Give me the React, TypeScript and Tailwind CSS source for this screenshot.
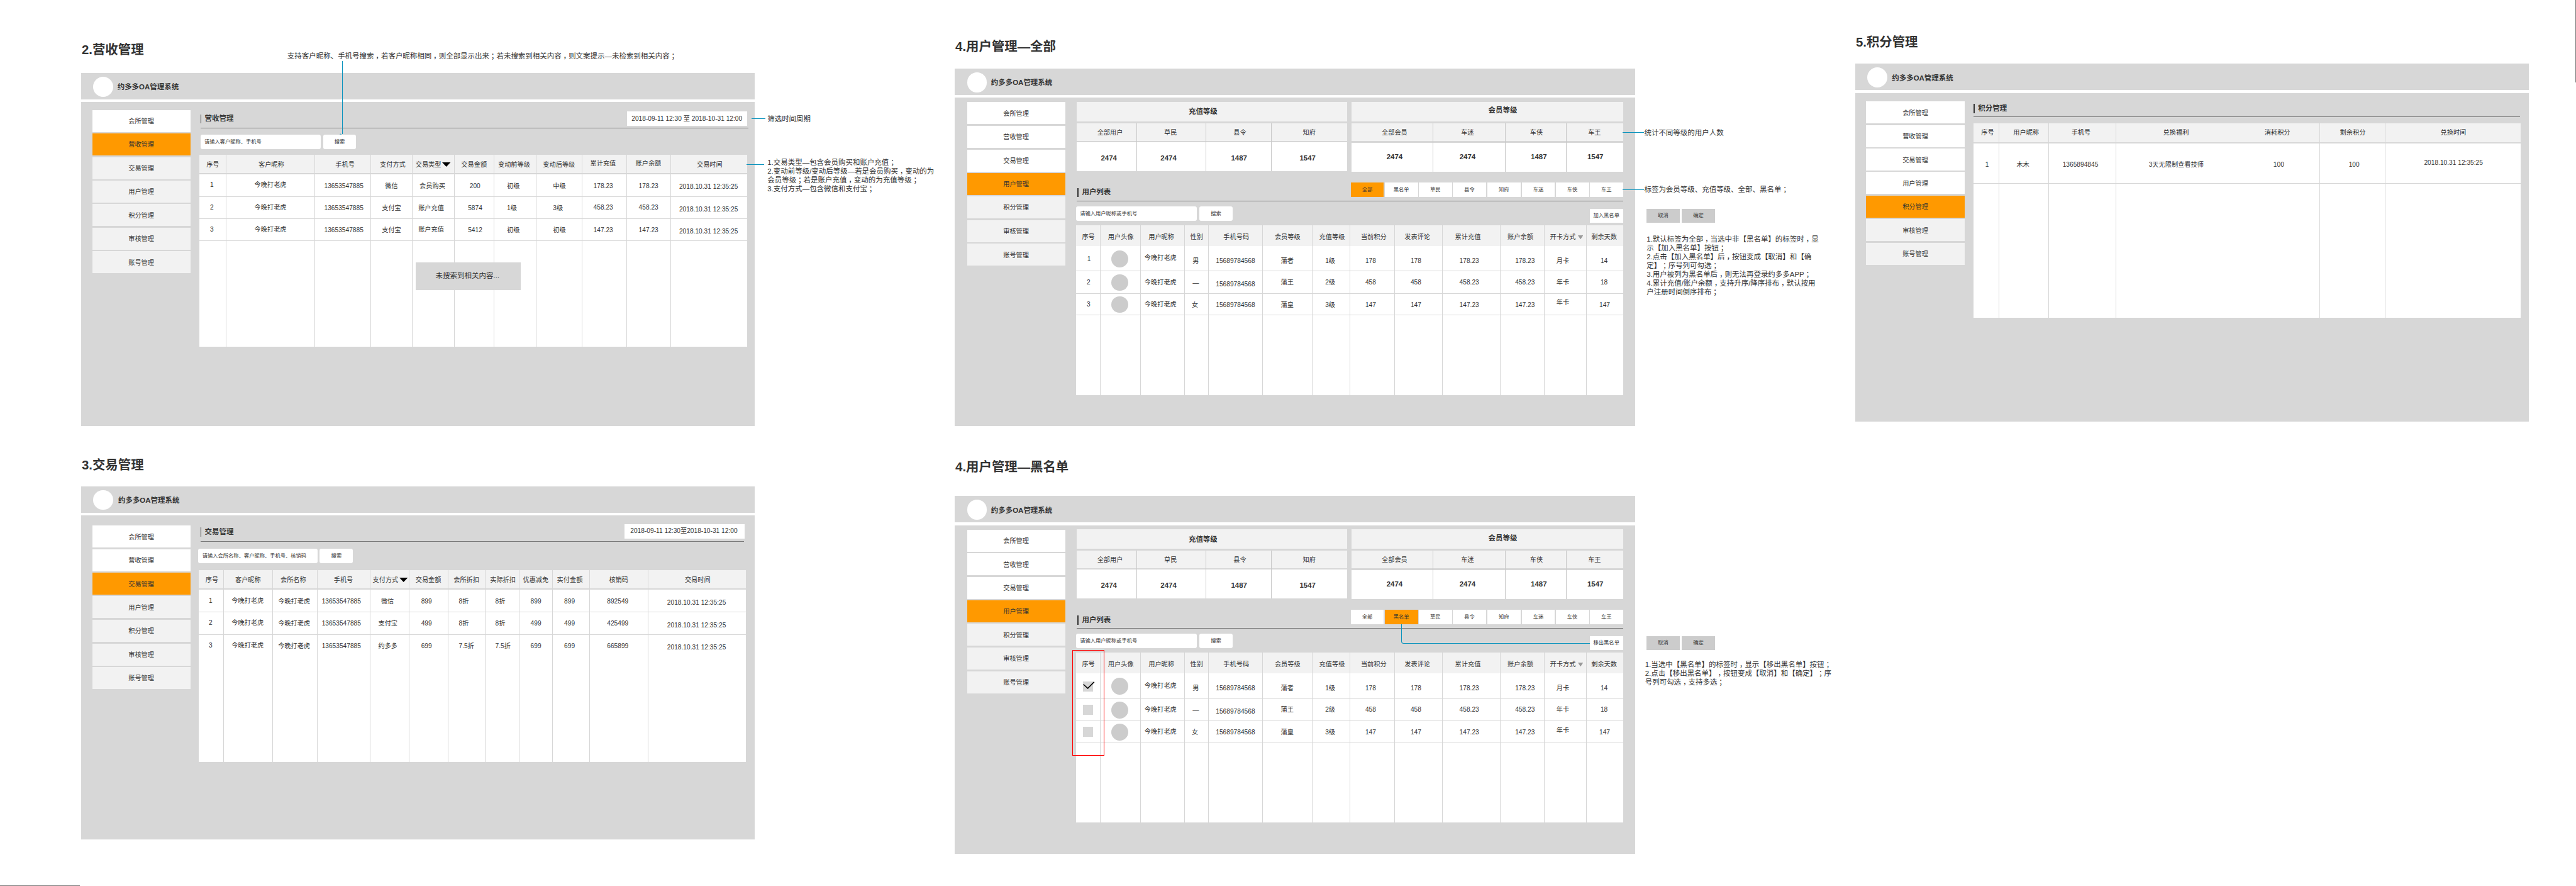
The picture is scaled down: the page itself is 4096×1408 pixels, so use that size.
import { Fragment, type ReactNode } from 'react';

// Every spacing class is counted in design units: one unit is 0.637212px,
// set through --spacing on the root element.

type Cell = ReactNode | [ReactNode, string];

type Column = {
  w: string;
  head: ReactNode;
  headPad: string;
  pad: string;
  cells: Cell[];
  open?: boolean;
};

const MENU = ['会所管理', '营收管理', '交易管理', '用户管理', '积分管理', '审核管理', '账号管理'];

function Title({ children, className }: { children: ReactNode; className: string }) {
  return (
    <h2 className={`flex h-44 shrink-0 items-center pl-1 text-[20.4px] font-bold whitespace-nowrap ${className}`}>
      {children}
    </h2>
  );
}

function Nav({ active, className }: { active: number; className: string }) {
  return (
    <nav className={`flex w-245 shrink-0 flex-col ${className}`}>
      {MENU.map((item, i) => (
        <div
          key={item}
          className={`flex h-55 shrink-0 items-center justify-center pt-3 ${i === 2 ? 'mb-3' : 'mb-4'} ${
            i === active ? 'bg-[#ff9900]' : i < active || i === 0 ? 'bg-white' : 'bg-[#f2f2f2]'
          }`}
        >
          {item}
        </div>
      ))}
    </nav>
  );
}

function Frame({
  active,
  width,
  height,
  brandPad,
  navClass,
  children,
}: {
  active: number;
  width: string;
  height: string;
  brandPad: string;
  navClass: string;
  children: ReactNode;
}) {
  return (
    <div className={`flex shrink-0 flex-col gap-7 ${width}`}>
      <header className="flex h-66 items-center bg-[#d7d7d7] pt-2 pl-30">
        <div className="size-50 rounded-full bg-white" />
        <div className={`pt-5 text-[11.47px] font-bold ${brandPad}`}>约多多OA管理系统</div>
      </header>
      <div className={`flex items-start bg-[#d7d7d7] ${height}`}>
        <Nav active={active} className={navClass} />
        {children}
      </div>
    </div>
  );
}

function SectionTitle({ children, className }: { children: ReactNode; className: string }) {
  return (
    <h3 className={`flex items-center text-[11.47px] font-bold ${className}`}>
      <span className="h-23 w-3 bg-[#333333]" />
      <span className="pl-8">{children}</span>
    </h3>
  );
}

function SearchRow({ hint, inputClass, gap, children }: { hint: string; inputClass: string; gap: string; children?: ReactNode }) {
  return (
    <div className="flex h-36 items-start text-[8.28px]">
      <div className={`flex h-36 items-center rounded-[3px] bg-white pt-1 pl-10 ${inputClass}`}>{hint}</div>
      <div className={`flex h-36 w-83 items-center justify-center rounded-[3px] bg-white pt-1 ${gap}`}>搜索</div>
      {children}
    </div>
  );
}

function Table({
  columns,
  height,
  headHeight,
  gap,
  rows,
  className,
}: {
  columns: Column[];
  height: string;
  headHeight: string;
  gap: string;
  rows: string[];
  className: string;
}) {
  return (
    <div className={`flex bg-white whitespace-nowrap ${height} ${className}`}>
      {columns.map((c, i) => (
        <div
          key={i}
          className={`shrink-0 border-[#d7d7d7] ${c.open || i === columns.length - 1 ? '' : 'border-r'} ${c.w}`}
        >
          <div className={`flex items-center bg-[#f2f2f2] ${headHeight} ${c.headPad}`}>{c.head}</div>
          <div className={`bg-[#d7d7d7] ${gap}`} />
          {c.cells.map((cell, r) => {
            const [content, pad] = Array.isArray(cell) ? (cell as [ReactNode, string]) : [cell, c.pad];
            return (
              <div key={r} className={`flex items-center border-[#d7d7d7] ${rows[r]} ${pad}`}>
                {content}
              </div>
            );
          })}
        </div>
      ))}
    </div>
  );
}

function Triangle({ className }: { className: string }) {
  return (
    <svg viewBox="0 0 20 11" preserveAspectRatio="none" className={className}>
      <polygon points="0,0 20,0 10,11" fill="currentColor" />
    </svg>
  );
}

// Full-width commas and semicolons sit on the baseline, in the middle of their cell.
function Note({ lines, className }: { lines: string[]; className: string }) {
  return (
    <div className={`text-[11.47px] leading-22 whitespace-nowrap ${className}`}>
      {lines.map((line) => (
        <p key={line}>
          {line.split(/([，；])/).map((part, i) =>
            part === '，' || part === '；' ? (
              <span key={i} className="inline-block w-[1em] pl-[0.25em]">
                {part}
              </span>
            ) : (
              <Fragment key={i}>{part}</Fragment>
            ),
          )}
        </p>
      ))}
    </div>
  );
}

const revenueColumns: Column[] = [
  { w: 'w-68', head: '序号', headPad: 'pl-18 pt-4', pad: 'pl-27', cells: ['1', '2', '3'] },
  { w: 'w-222', head: '客户昵称', headPad: 'pl-80 pt-4', pad: 'pl-70', cells: ['今晚打老虎', '今晚打老虎', '今晚打老虎'] },
  { w: 'w-139', head: '手机号', headPad: 'pl-50 pt-4', pad: 'pl-22 pt-4', cells: ['13653547885', '13653547885', '13653547885'] },
  { w: 'w-103', head: '支付方式', headPad: 'pl-22 pt-4', pad: 'pl-27 pt-4', cells: [['微信', 'pl-35 pt-4'], '支付宝', '支付宝'] },
  {
    w: 'w-106',
    head: (
      <>
        交易类型
        <Triangle className="mb-2 ml-3 h-11 w-21 text-black" />
      </>
    ),
    headPad: 'pl-8 pt-4',
    pad: 'pl-15 pt-4',
    cells: [['会员购买', 'pl-18 pt-5'], '账户充值', ['账户充值', 'pl-15']],
  },
  { w: 'w-98', head: '交易金额', headPad: 'pl-16 pt-4', pad: 'pl-33 pt-4', cells: [['200', 'pl-37 pt-4'], '5874', '5412'] },
  { w: 'w-106', head: '变动前等级', headPad: 'pl-10 pt-4', pad: 'pl-32 pt-4', cells: ['初级', '1级', '初级'] },
  { w: 'w-114', head: '变动后等级', headPad: 'pl-16 pt-4', pad: 'pl-41 pt-4', cells: ['中级', '3级', '初级'] },
  { w: 'w-111', head: '累计充值', headPad: 'pl-20', pad: 'pl-28 pt-4', cells: ['178.23', ['458.23', 'pl-28 pt-1'], '147.23'] },
  { w: 'w-110', head: '账户余额', headPad: 'pl-22', pad: 'pl-30 pt-4', cells: ['178.23', ['458.23', 'pl-30 pt-1'], '147.23'] },
  {
    w: 'w-190',
    head: '交易时间',
    headPad: 'pl-65 pt-4',
    pad: 'pl-21 pt-10',
    cells: ['2018.10.31 12:35:25', '2018.10.31 12:35:25', '2018.10.31 12:35:25'],
  },
];

const tradeColumns: Column[] = [
  { w: 'w-63', head: '序号', headPad: 'pl-17 pt-3', pad: 'pl-25 pt-1', cells: ['1', '2', '3'] },
  { w: 'w-122', head: '客户昵称', headPad: 'pl-28 pt-3', pad: 'pl-19 pt-1', cells: ['今晚打老虎', '今晚打老虎', '今晚打老虎'] },
  { w: 'w-112', head: '会所名称', headPad: 'pl-19 pt-3', pad: 'pl-13 pt-4', cells: ['今晚打老虎', '今晚打老虎', '今晚打老虎'] },
  { w: 'w-131', head: '手机号', headPad: 'pl-40 pt-3', pad: 'pl-10 pt-4', cells: ['13653547885', '13653547885', '13653547885'] },
  {
    w: 'w-98',
    head: (
      <>
        支付方式
        <Triangle className="ml-2 h-11 w-21 text-black" />
      </>
    ),
    headPad: 'pl-6 pt-3',
    pad: 'pl-20 pt-4',
    cells: [['微信', 'pl-27 pt-4'], '支付宝', '约多多'],
  },
  { w: 'w-97', head: '交易金额', headPad: 'pl-15 pt-3', pad: 'pl-29 pt-4', cells: ['899', '499', '699'] },
  { w: 'w-92', head: '会所折扣', headPad: 'pl-13 pt-3', pad: 'pl-26 pt-4', cells: ['8折', '8折', '7.5折'] },
  { w: 'w-85', head: '实际折扣', headPad: 'pl-12 pt-3', pad: 'pl-25 pt-4', cells: ['8折', '8折', '7.5折'] },
  { w: 'w-84', head: '优惠减免', headPad: 'pl-9 pt-3', pad: 'pl-28 pt-4', cells: ['899', '499', '699'] },
  { w: 'w-92', head: '实付金额', headPad: 'pl-10 pt-3', pad: 'pl-28 pt-4', cells: ['899', '499', '699'] },
  { w: 'w-146', head: '核销码', headPad: 'pl-48 pt-3', pad: 'pl-43 pt-4', cells: ['892549', '425499', '665899'] },
  {
    w: 'w-244',
    head: '交易时间',
    headPad: 'pl-91 pt-3',
    pad: 'pl-47 pt-11',
    cells: ['2018.10.31 12:35:25', '2018.10.31 12:35:25', '2018.10.31 12:35:25'],
  },
];

const pointColumns: Column[] = [
  { w: 'w-64', head: '序号', headPad: 'pl-19 pt-2', pad: 'pl-29 pt-9', cells: ['1'] },
  { w: 'w-124', head: '用户昵称', headPad: 'pl-35 pt-2', pad: 'pl-43 pt-7', cells: ['木木'] },
  { w: 'w-168', head: '手机号', headPad: 'pl-56 pt-2', pad: 'pl-34 pt-7', cells: ['1365894845'] },
  { w: 'w-319', head: '兑换福利', headPad: 'pl-117 pt-2', pad: 'pl-81 pt-10', cells: ['3天无限制查看技师'], open: true },
  { w: 'w-190', head: '消耗积分', headPad: 'pl-51 pt-2', pad: 'pl-73 pt-9', cells: ['100'] },
  { w: 'w-163', head: '剩余积分', headPad: 'pl-49 pt-2', pad: 'pl-71 pt-9', cells: ['100'] },
  { w: 'w-337', head: '兑换时间', headPad: 'pl-137 pt-2', pad: 'pl-96 pb-2', cells: ['2018.10.31 12:35:25'] },
];

const avatar = <span className="size-42 rounded-full bg-[#cccccc]" />;
const checkbox = <span className="size-25 bg-[#d7d7d7]" />;
const checkedBox = (
  <span className="relative size-25 bg-[#d7d7d7]">
    <svg viewBox="0 0 30 22" className="absolute top-0 left-0 h-22 w-30" fill="none" stroke="#000" strokeWidth="2.4">
      <path d="M1 7 L12 17 L28 1" />
    </svg>
  </span>
);

function userColumns(selecting: boolean): Column[] {
  const first: Cell[] = selecting
    ? [[checkedBox, 'pl-18 pt-5'], [checkbox, 'pl-18'], [checkbox, 'pl-18']]
    : [['1', 'pl-28 pt-4'], '2', '3'];
  const spread = (pads: [string, string, string], values: [ReactNode, ReactNode, ReactNode]): Cell[] =>
    values.map((v, i): Cell => [v, pads[i]]);
  return [
    { w: 'w-62', head: '序号', headPad: 'pl-15 pt-8', pad: 'pl-27', cells: first },
    { w: 'w-100', head: '用户头像', headPad: 'pl-18 pt-8', pad: 'pl-26 pt-1', cells: [[avatar, 'pl-26 pt-3'], avatar, avatar] },
    {
      w: 'w-110',
      head: '用户昵称',
      headPad: 'pl-19 pt-8',
      pad: 'pl-9 pt-2',
      cells: [['今晚打老虎', 'pl-9'], '今晚打老虎', '今晚打老虎'],
    },
    { w: 'w-60', head: '性别', headPad: 'pl-13 pt-8', pad: '', cells: spread(['pl-19 pt-14', 'pl-19 pt-5', 'pl-17 pt-5'], ['男', '—', '女']) },
    {
      w: 'w-135',
      head: '手机号码',
      headPad: 'pl-36 pt-8',
      pad: '',
      cells: spread(['pl-17 pt-14', 'pl-17 pt-11', 'pl-17 pt-3'], ['15689784568', '15689784568', '15689784568']),
    },
    { w: 'w-124', head: '会员等级', headPad: 'pl-29 pt-8', pad: '', cells: spread(['pl-44 pt-14', 'pl-44 pt-2', 'pl-44 pt-3'], ['蒲者', '蒲王', '蒲皇']) },
    { w: 'w-94', head: '充值等级', headPad: 'pl-16 pt-8', pad: '', cells: spread(['pl-31 pt-14', 'pl-31 pt-2', 'pl-31 pt-3'], ['1级', '2级', '3级']) },
    { w: 'w-111', head: '当前积分', headPad: 'pl-26 pt-8', pad: '', cells: spread(['pl-37 pt-14', 'pl-37 pt-2', 'pl-37 pt-3'], ['178', '458', '147']) },
    { w: 'w-119', head: '发表评论', headPad: 'pl-24 pt-8', pad: '', cells: spread(['pl-39 pt-14', 'pl-39 pt-2', 'pl-39 pt-3'], ['178', '458', '147']) },
    {
      w: 'w-145',
      head: '累计充值',
      headPad: 'pl-31 pt-8',
      pad: '',
      cells: spread(['pl-42 pt-14', 'pl-42 pt-2', 'pl-42 pt-3'], ['178.23', '458.23', '147.23']),
    },
    {
      w: 'w-110',
      head: '账户余额',
      headPad: 'pl-17 pt-8',
      pad: '',
      cells: spread(['pl-36 pt-14', 'pl-36 pt-2', 'pl-36 pt-3'], ['178.23', '458.23', '147.23']),
    },
    {
      w: 'w-104',
      head: (
        <>
          开卡方式
          <Triangle className="ml-6 h-10 w-13 text-[#999999]" />
        </>
      ),
      headPad: 'pl-13 pt-8',
      pad: '',
      cells: spread(['pl-29 pt-14', 'pl-29 pt-2', 'pl-29 pb-7'], ['月卡', '年卡', '年卡']),
    },
    { w: 'w-91', head: '剩余天数', headPad: 'pl-12 pt-8', pad: '', cells: spread(['pl-35 pt-14', 'pl-35 pt-2', 'pl-32 pt-3'], ['14', '18', '147']) },
  ];
}

type Stat = { w: string; label: string; labelPad: string; value: string; valuePad: string };

const rechargeStats: Stat[] = [
  { w: 'w-152', label: '全部用户', labelPad: 'pl-52', value: '2474', valuePad: 'pl-61 pt-9' },
  { w: 'w-172', label: '草民', labelPad: 'pl-67', value: '2474', valuePad: 'pl-58 pt-9' },
  { w: 'w-163', label: '县令', labelPad: 'pl-68', value: '1487', valuePad: 'pl-62 pt-9' },
  { w: 'w-189', label: '知府', labelPad: 'pl-78', value: '1547', valuePad: 'pl-70 pt-9' },
];

const memberStats: Stat[] = [
  { w: 'w-205', label: '全部会员', labelPad: 'pl-76', value: '2474', valuePad: 'pl-88' },
  { w: 'w-180', label: '车迷', labelPad: 'pl-69', value: '2474', valuePad: 'pl-65' },
  { w: 'w-152', label: '车侠', labelPad: 'pl-61', value: '1487', valuePad: 'pl-63' },
  { w: 'w-141', label: '车王', labelPad: 'pl-54', value: '1547', valuePad: 'pl-52' },
];

function StatBlock({ title, titlePad, stats, gap }: { title: string; titlePad: string; stats: Stat[]; gap: string }) {
  return (
    <div>
      <div className={`flex h-49 items-center bg-[#f2f2f2] text-[11.47px] font-bold ${titlePad}`}>{title}</div>
      <div className="mt-4 flex">
        {stats.map((s, i) => (
          <div key={s.label} className={`flex flex-col border-[#c8c8c8] ${gap} ${s.w} ${i < stats.length - 1 ? 'border-r' : ''}`}>
            <div className={`flex h-45 items-center bg-[#f2f2f2] pt-3 ${s.labelPad}`}>{s.label}</div>
            <div className={`flex h-72 items-center bg-white text-[11.47px] font-bold ${s.valuePad}`}>{s.value}</div>
          </div>
        ))}
      </div>
    </div>
  );
}

const TABS = ['全部', '黑名单', '草民', '县令', '知府', '车迷', '车侠', '车王'];

function UserBoard({ tab, action, selecting, children }: { tab: number; action: string; selecting: boolean; children?: ReactNode }) {
  return (
    <Frame active={3} width="w-1698" height="h-819" brandPad="ml-10" navClass="ml-30 pt-11">
      <div className="relative ml-27 w-1365 pt-10">
        <div className="flex items-start gap-10 pl-1">
          <StatBlock title="充值等级" titlePad="pl-280 pt-2" stats={rechargeStats} gap="gap-3" />
          <StatBlock title="会员等级" titlePad="pl-342 pb-4" stats={memberStats} gap="gap-4" />
        </div>
        <div className="mt-27 ml-2 flex h-47 w-1363 items-start border-b border-[#797979]">
          <SectionTitle className="mt-14 ml-2 h-23">用户列表</SectionTitle>
          <div className="ml-auto flex text-[8.28px]">
            {TABS.map((t, i) => (
              <div
                key={t}
                className={`flex h-36 w-83 items-center justify-center pt-1 ${i === 4 || i === 5 ? 'ml-3' : 'ml-2'} ${
                  i === tab ? 'bg-[#ff9900]' : 'bg-white'
                }`}
              >
                {t}
              </div>
            ))}
          </div>
        </div>
        <div className="h-13" />
        <SearchRow hint="请输入用户昵称或手机号" inputClass="w-302" gap="ml-6">
          <div className="mt-6 ml-auto flex h-34 w-83 items-center justify-center bg-white pt-1">{action}</div>
        </SearchRow>
        <Table
          className="mt-11"
          columns={userColumns(selecting)}
          height="h-424"
          headHeight="h-51"
          gap="h-0"
          rows={['h-64 border-b', 'h-56 border-b', 'h-54 border-b']}
        />
        {children}
      </div>
    </Frame>
  );
}

function DialogButtons({ className }: { className: string }) {
  return (
    <div className={`flex gap-6 text-[8.28px] ${className}`}>
      <div className="flex h-34 w-82 items-center justify-center bg-[#cccccc] pt-1">取消</div>
      <div className="flex h-34 w-82 items-center justify-center bg-[#cccccc] pt-1">确定</div>
    </div>
  );
}

export default function App() {
  return (
    <main className="relative flex h-[1408px] w-[4096px] items-start overflow-hidden bg-white font-['Liberation_Sans','Noto_Sans_CJK_SC',sans-serif] text-[10.2px] leading-none text-[#333333] [--spacing:0.637212px] [text-spacing-trim:space-all]">
      {/* Revenue and transactions */}
      <section className="w-2383 shrink-0 pt-102 pl-203">
        <div className="flex h-44 items-center">
          <Title className="w-514">2.营收管理</Title>
          <div className="relative mt-32">
            <Note
              className=""
              lines={['支持客户昵称、手机号搜索，若客户昵称相同，则全部显示出来；若未搜索到相关内容，则文案提示—未检索到相关内容；']}
            />
            <div className="absolute top-23 left-136 h-183 border-l border-[#0a93bd]" />
            <svg viewBox="0 0 6 5" className="absolute top-203 left-131 h-5 w-6" fill="none" stroke="#0a93bd">
              <path d="M0.5 4 L2 1 L3.5 4 L5 2" />
            </svg>
          </div>
        </div>
        <div className="mt-36 flex items-start">
          <Frame active={1} width="w-1681" height="h-807" brandPad="ml-10" navClass="ml-27 pt-19">
            <div className="relative ml-22 w-1371 pt-23">
              <div className="ml-3 flex h-42 w-1368 items-start border-b border-[#797979]">
                <SectionTitle className="h-37">营收管理</SectionTitle>
                <div className="mr-3 ml-auto flex h-36 w-300 items-center bg-white pt-1 pl-11">2018-09-11 12:30 至 2018-10-31 12:00</div>
              </div>
              <div className="h-16" />
              <SearchRow hint="请输入客户昵称、手机号" inputClass="ml-3 w-300" gap="ml-6" />
              <Table
                className="mt-14 w-1367"
                columns={revenueColumns}
                height="h-479"
                headHeight="h-46"
                gap="h-3"
                rows={['h-56 border-b', 'h-56 border-b', 'h-54 border-b']}
              />
              <div className="absolute top-399 left-541 flex h-70 w-261 items-center bg-[#d7d7d7] pl-49 text-[11.47px]">未搜索到相关内容...</div>
            </div>
          </Frame>
          <aside className="relative pt-103">
            <div className="-ml-9 flex items-center">
              <div className="w-35 border-t border-[#0a93bd]" />
              <Note className="ml-5" lines={['筛选时间周期']} />
            </div>
            <div className="mt-87 -ml-21 flex items-start">
              <div className="mt-15 w-43 border-t border-[#0a93bd]" />
              <Note
                className="ml-9"
                lines={[
                  '1.交易类型—包含会员购买和账户充值；',
                  '2.变动前等级/变动后等级—若是会员购买，变动的为',
                  '会员等级；若是账户充值，变动的为充值等级；',
                  '3.支付方式—包含微信和支付宝；',
                ]}
              />
            </div>
          </aside>
        </div>

        <Title className="mt-75.5">3.交易管理</Title>
        <div className="mt-31.5">
          <Frame active={2} width="w-1681" height="h-807" brandPad="ml-12" navClass="ml-27 pt-25">
            <div className="ml-21 w-1366 pt-21">
              <div className="ml-4 flex h-44 w-1356 items-start border-b border-[#797979]">
                <SectionTitle className="h-41">交易管理</SectionTitle>
                <div className="-mr-2 ml-auto flex h-36 w-300 items-center bg-white pt-1 pl-15">2018-09-11 12:30至2018-10-31 12:00</div>
              </div>
              <div className="h-18" />
              <SearchRow hint="请输入会所名称、客户昵称、手机号、核销码" inputClass="-ml-1 w-298" gap="ml-5" />
              <Table
                className="mt-17"
                columns={tradeColumns}
                height="h-479"
                headHeight="h-46"
                gap="h-3"
                rows={['h-56 border-b', 'h-56 border-b', 'h-55']}
              />
            </div>
          </Frame>
        </div>
      </section>

      {/* User management */}
      <section className="w-2247 shrink-0 pt-95">
        <Title className="">4.用户管理—全部</Title>
        <div className="mt-32 flex items-start">
          <UserBoard tab={0} action="加入黑名单" selecting={false} />
          <aside className="relative pt-148.5">
            <div className="-ml-32 flex items-center">
              <div className="w-54 border-t border-[#0a93bd]" />
              <Note className="" lines={['统计不同等级的用户人数']} />
            </div>
            <div className="mt-120.5 -ml-32 flex items-center">
              <div className="w-54 border-t border-[#0a93bd]" />
              <Note className="" lines={['标签为会员等级、充值等级、全部、黑名单；']} />
            </div>
            <DialogButtons className="mt-37 ml-28" />
            <Note
              className="mt-30 ml-28"
              lines={[
                '1.默认标签为全部，当选中非【黑名单】的标签时，显',
                '示【加入黑名单】按钮；',
                '2.点击【加入黑名单】后，按钮变成【取消】和【确',
                '定】；序号列可勾选；',
                '3.用户被列为黑名单后，则无法再登录约多多APP；',
                '4.累计充值/账户余额，支持升序/降序排布，默认按用',
                '户注册时间倒序排布；',
              ]}
            />
          </aside>
        </div>

        <Title className="mt-79.5">4.用户管理—黑名单</Title>
        <div className="mt-50.5 flex items-start">
          <UserBoard tab={1} action="移出黑名单" selecting>
            <div className="absolute top-247 left-812 h-48 w-470 rounded-bl-[4px] border-b border-l border-[#0a93bd]" />
            <div className="absolute top-312 -left-9 h-263 w-80 border border-[#ff0000]" />
          </UserBoard>
          <aside className="relative pt-350">
            <DialogButtons className="ml-28" />
            <Note
              className="mt-25.5 ml-24"
              lines={[
                '1.当选中【黑名单】的标签时，显示【移出黑名单】按钮；',
                '2.点击【移出黑名单】，按钮变成【取消】和【确定】；序',
                '号列可勾选，支持多选；',
              ]}
            />
          </aside>
        </div>
      </section>

      {/* Points */}
      <section className="shrink-0 pt-83">
        <Title className="">5.积分管理</Title>
        <div className="mt-32">
          <Frame active={4} width="w-1681" height="h-819" brandPad="ml-11" navClass="ml-27 pt-21">
            <div className="ml-23 w-1365 pt-27">
              <div className="flex h-33 w-1363 items-start border-b border-[#797979]">
                <SectionTitle className="h-23">积分管理</SectionTitle>
              </div>
              <Table
                className="mt-15"
                columns={pointColumns}
                height="h-486"
                headHeight="h-48"
                gap="h-3"
                rows={['h-100 border-b']}
              />
            </div>
          </Frame>
        </div>
      </section>

      <div className="absolute bottom-0 left-0 w-200 border-b border-[#797979]" />
      <div className="absolute top-0 right-0 h-205 border-r border-[#797979]" />
    </main>
  );
}
